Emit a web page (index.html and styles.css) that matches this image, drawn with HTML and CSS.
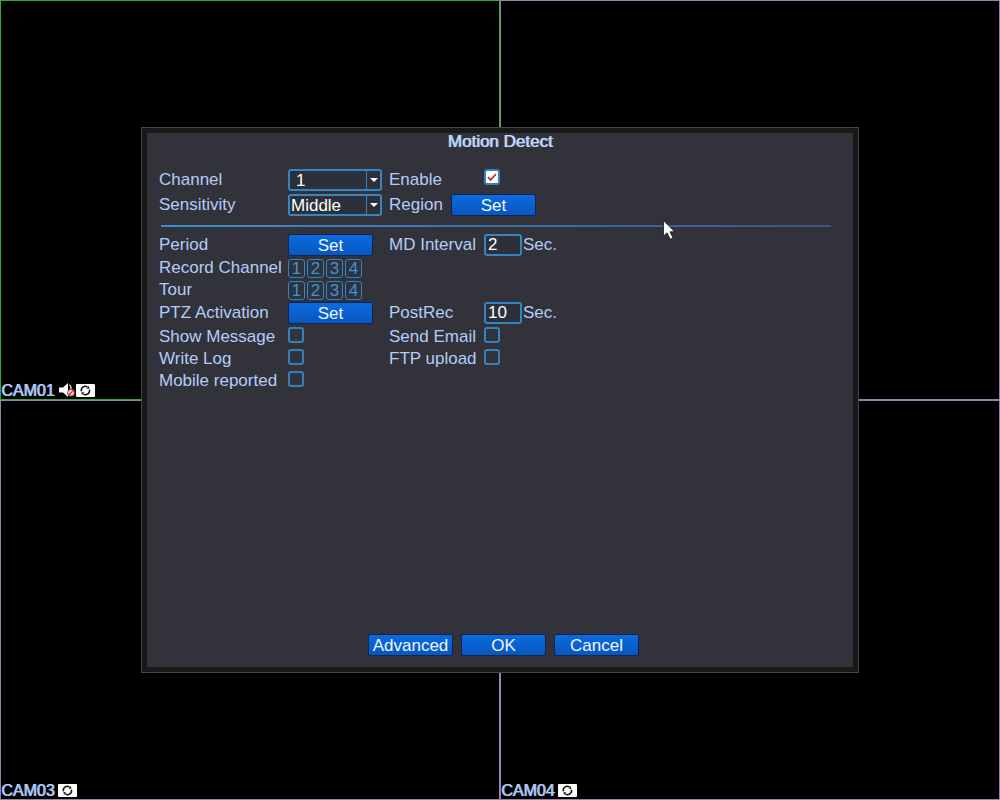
FILE: index.html
```
<!DOCTYPE html>
<html lang="en">
<head>
<meta charset="utf-8">
<title>Motion Detect</title>
<link rel="stylesheet" href="styles.css">
</head>
<body>
<svg class="defs" aria-hidden="true">
  <symbol id="cycle" viewBox="0 0 19 13">
    <rect width="19" height="13" rx="1" fill="#fff"/>
    <path d="M5.4 7.4A4 4 0 0 1 11.4 3M13.4 5.6A4 4 0 0 1 7.4 10" fill="none" stroke="#111" stroke-width="1.5"/>
    <path d="M10.6 4.8L13.4 4.8L12.8 2ZM8.2 8.2L5.4 8.2L6 11Z" fill="#111"/>
  </symbol>
  <symbol id="arrow" viewBox="0 0 8 4"><path d="M0 0H8L4 4Z" fill="#fff"/></symbol>
</svg>
<main class="wall">
  <section class="cam active"><span class="cam-name">CAM01</span>
    <svg class="mute" viewBox="0 0 16 14"><path d="M0 4.5H4L9 0V14L4 9.5H0Z" fill="#fff"/><path d="M10.5 1.5Q12.5 4 12 6.5" fill="none" stroke="#d8c8c8" stroke-width="1.3"/><circle cx="12" cy="9.8" r="3.3" fill="#f4dcdc" stroke="#b83a3a" stroke-width="1.1"/><path d="M9.8 12L14.2 7.6" stroke="#b83a3a" stroke-width="1.3"/></svg>
    <svg class="cycle"><use href="#cycle"/></svg></section>
  <section class="cam"></section>
  <section class="cam"><span class="cam-name">CAM03</span><svg class="cycle"><use href="#cycle"/></svg></section>
  <section class="cam"><span class="cam-name">CAM04</span><svg class="cycle"><use href="#cycle"/></svg></section>
</main>

<form class="dialog" role="dialog" aria-labelledby="title">
  <div class="panel">
    <h1 class="title" id="title">Motion Detect</h1>
    <div class="row mid">
      <label for="channel">Channel</label>
      <div class="dropdown"><select class="field indent" id="channel"><option>1</option></select><span class="drop"><svg><use href="#arrow"/></svg></span></div>
      <label for="enable">Enable</label>
      <input class="check raised" type="checkbox" id="enable" checked>
    </div>
    <div class="row tall">
      <label for="sensitivity">Sensitivity</label>
      <div class="dropdown"><select class="field" id="sensitivity"><option>Middle</option></select><span class="drop"><svg><use href="#arrow"/></svg></span></div>
      <div class="region"><span id="region">Region</span><button class="btn" type="button" aria-describedby="region">Set</button></div>
    </div>
    <hr class="rule">
    <div class="row tall">
      <span id="period">Period</span>
      <button class="btn" type="button" aria-describedby="period">Set</button>
      <label for="interval">MD Interval</label>
      <div class="unit"><input class="field" id="interval" type="text" value="2"><span>Sec.</span></div>
    </div>
    <div class="row">
      <span id="record">Record Channel</span>
      <div class="channels" role="group" aria-labelledby="record"><button class="num" type="button">1</button><button class="num" type="button">2</button><button class="num" type="button">3</button><button class="num" type="button">4</button></div>
    </div>
    <div class="row">
      <span id="tour">Tour</span>
      <div class="channels" role="group" aria-labelledby="tour"><button class="num" type="button">1</button><button class="num" type="button">2</button><button class="num" type="button">3</button><button class="num" type="button">4</button></div>
    </div>
    <div class="row mid">
      <span id="ptz">PTZ Activation</span>
      <button class="btn" type="button" aria-describedby="ptz">Set</button>
      <label for="postrec">PostRec</label>
      <div class="unit"><input class="field" id="postrec" type="text" value="10"><span>Sec.</span></div>
    </div>
    <div class="row checks">
      <label for="message">Show Message</label><input class="check" type="checkbox" id="message">
      <label for="email">Send Email</label><input class="check" type="checkbox" id="email">
    </div>
    <div class="row checks">
      <label for="log">Write Log</label><input class="check" type="checkbox" id="log">
      <label for="ftp">FTP upload</label><input class="check" type="checkbox" id="ftp">
    </div>
    <div class="row checks">
      <label for="mobile">Mobile reported</label><input class="check" type="checkbox" id="mobile">
    </div>
    <div class="actions">
      <button class="btn" type="button">Advanced</button>
      <button class="btn" type="submit">OK</button>
      <button class="btn" type="button">Cancel</button>
    </div>
  </div>
</form>
<svg class="cursor" viewBox="0 0 12 20" aria-hidden="true"><path d="M.5 .5V16L4 12.8L7.2 19.2L10 18L7 11.8H11.6Z" fill="#fff" stroke="#15151a" stroke-width=".8"/></svg>
</body>
</html>
```
FILE: styles.css
```
* { box-sizing: border-box; }
body {
  margin: 0;
  background: #000;
  color: #b2cdf8;
  font: 17px/20px "Liberation Sans", Arial, sans-serif;
}
.defs { position: absolute; width: 0; height: 0; }

.wall {
  display: grid;
  grid-template: 1fr 1fr / 1fr 1fr;
  height: 100vh;
}
.cam {
  display: flex;
  align-items: flex-end;
  border: 1px solid #9585ad;
}
.cam.active { border-color: #36a840; }
.cam-name {
  margin-right: 4px;
  font-size: 16px;
  line-height: 17px;
  text-shadow: 1px 0 #9db8e8;
}
.cycle { width: 19px; height: 13px; margin-bottom: 2px; }
.mute { width: 16px; height: 14px; margin: 0 1px 2px; }

.dialog {
  position: absolute;
  inset: 127px 141px;
  display: flex;
  padding: 5px;
  border: 1px solid #444544;
  background: #181a1a;
}
.panel {
  flex: 1;
  display: flex;
  flex-direction: column;
  padding: 0 12px 11px;
  background: #32323b;
}
.title {
  margin: 0 0 17px;
  color: #c4dafc;
  font-size: 17px;
  font-weight: 400;
  line-height: 18px;
  text-align: center;
  text-shadow: 1px 0 #a2bce8;
}
.row {
  display: grid;
  grid-template-columns: 129px 101px 95px auto;
  align-items: center;
  justify-content: start;
  height: 22px;
}
.mid { height: 24px; }
.tall { height: 25px; }
.checks { align-items: end; }
.checks .check { margin-bottom: 4px; }

.rule {
  width: calc(100% - 12px);
  height: 2px;
  margin: 8px 0 5px 2px;
  border: 0;
  background: linear-gradient(90deg, #3f8fd0, #3b71aa 50%, #3f5580);
}

.field {
  height: 22px;
  margin: 0;
  padding: 0 2px;
  border: 2px solid #3983be;
  border-radius: 3px;
  outline: 0;
  background: #2c303a;
  color: #fff;
  font: inherit;
}
.dropdown { position: relative; width: 94px; height: 22px; }
.dropdown .field { appearance: none; display: block; width: 100%; padding: 0 1px; }
.dropdown .indent { padding-left: 6px; }
.drop {
  position: absolute;
  inset: 2px 2px 2px auto;
  display: grid;
  place-items: center;
  width: 14px;
  border-left: 1px solid #3983be;
  pointer-events: none;
}
.drop svg { width: 8px; height: 4px; }

.unit { display: flex; align-items: center; gap: 1px; }
.unit .field { width: 38px; }
.region { grid-column: 3 / span 2; display: flex; align-items: center; }
.region span { width: 62px; }

.btn {
  width: 85px;
  height: 22px;
  padding: 1px 0 0;
  border: 1px solid #0c2450;
  border-radius: 2px;
  background: linear-gradient(#0d6ade, #0757c0);
  color: #eef6ff;
  font: inherit;
  line-height: 19px;
}
.channels { display: flex; gap: 2px; }
.num {
  width: 17px;
  height: 19px;
  padding: 0;
  border: 1px solid #3983be;
  border-radius: 3px;
  background: #2c3440;
  color: #4790cc;
  font: inherit;
  line-height: 17px;
}
.check {
  appearance: none;
  width: 16px;
  height: 16px;
  margin: 0;
  border: 2px solid #397fb8;
  border-radius: 3px;
  background: #2f343f;
}
.check:checked {
  background: #fff url("data:image/svg+xml,%3Csvg xmlns='http://www.w3.org/2000/svg' viewBox='0 0 12 12'%3E%3Cpath d='M2 6L4.5 9L10 3' fill='none' stroke='%23c02020' stroke-width='1.6'/%3E%3C/svg%3E") center / 12px no-repeat;
}
.raised { margin-bottom: 6px; }

.actions {
  display: flex;
  justify-content: center;
  gap: 8px;
  margin-top: auto;
  padding-left: 7px;
}
.cursor { position: absolute; left: 663px; top: 220px; width: 12px; height: 20px; }
```
